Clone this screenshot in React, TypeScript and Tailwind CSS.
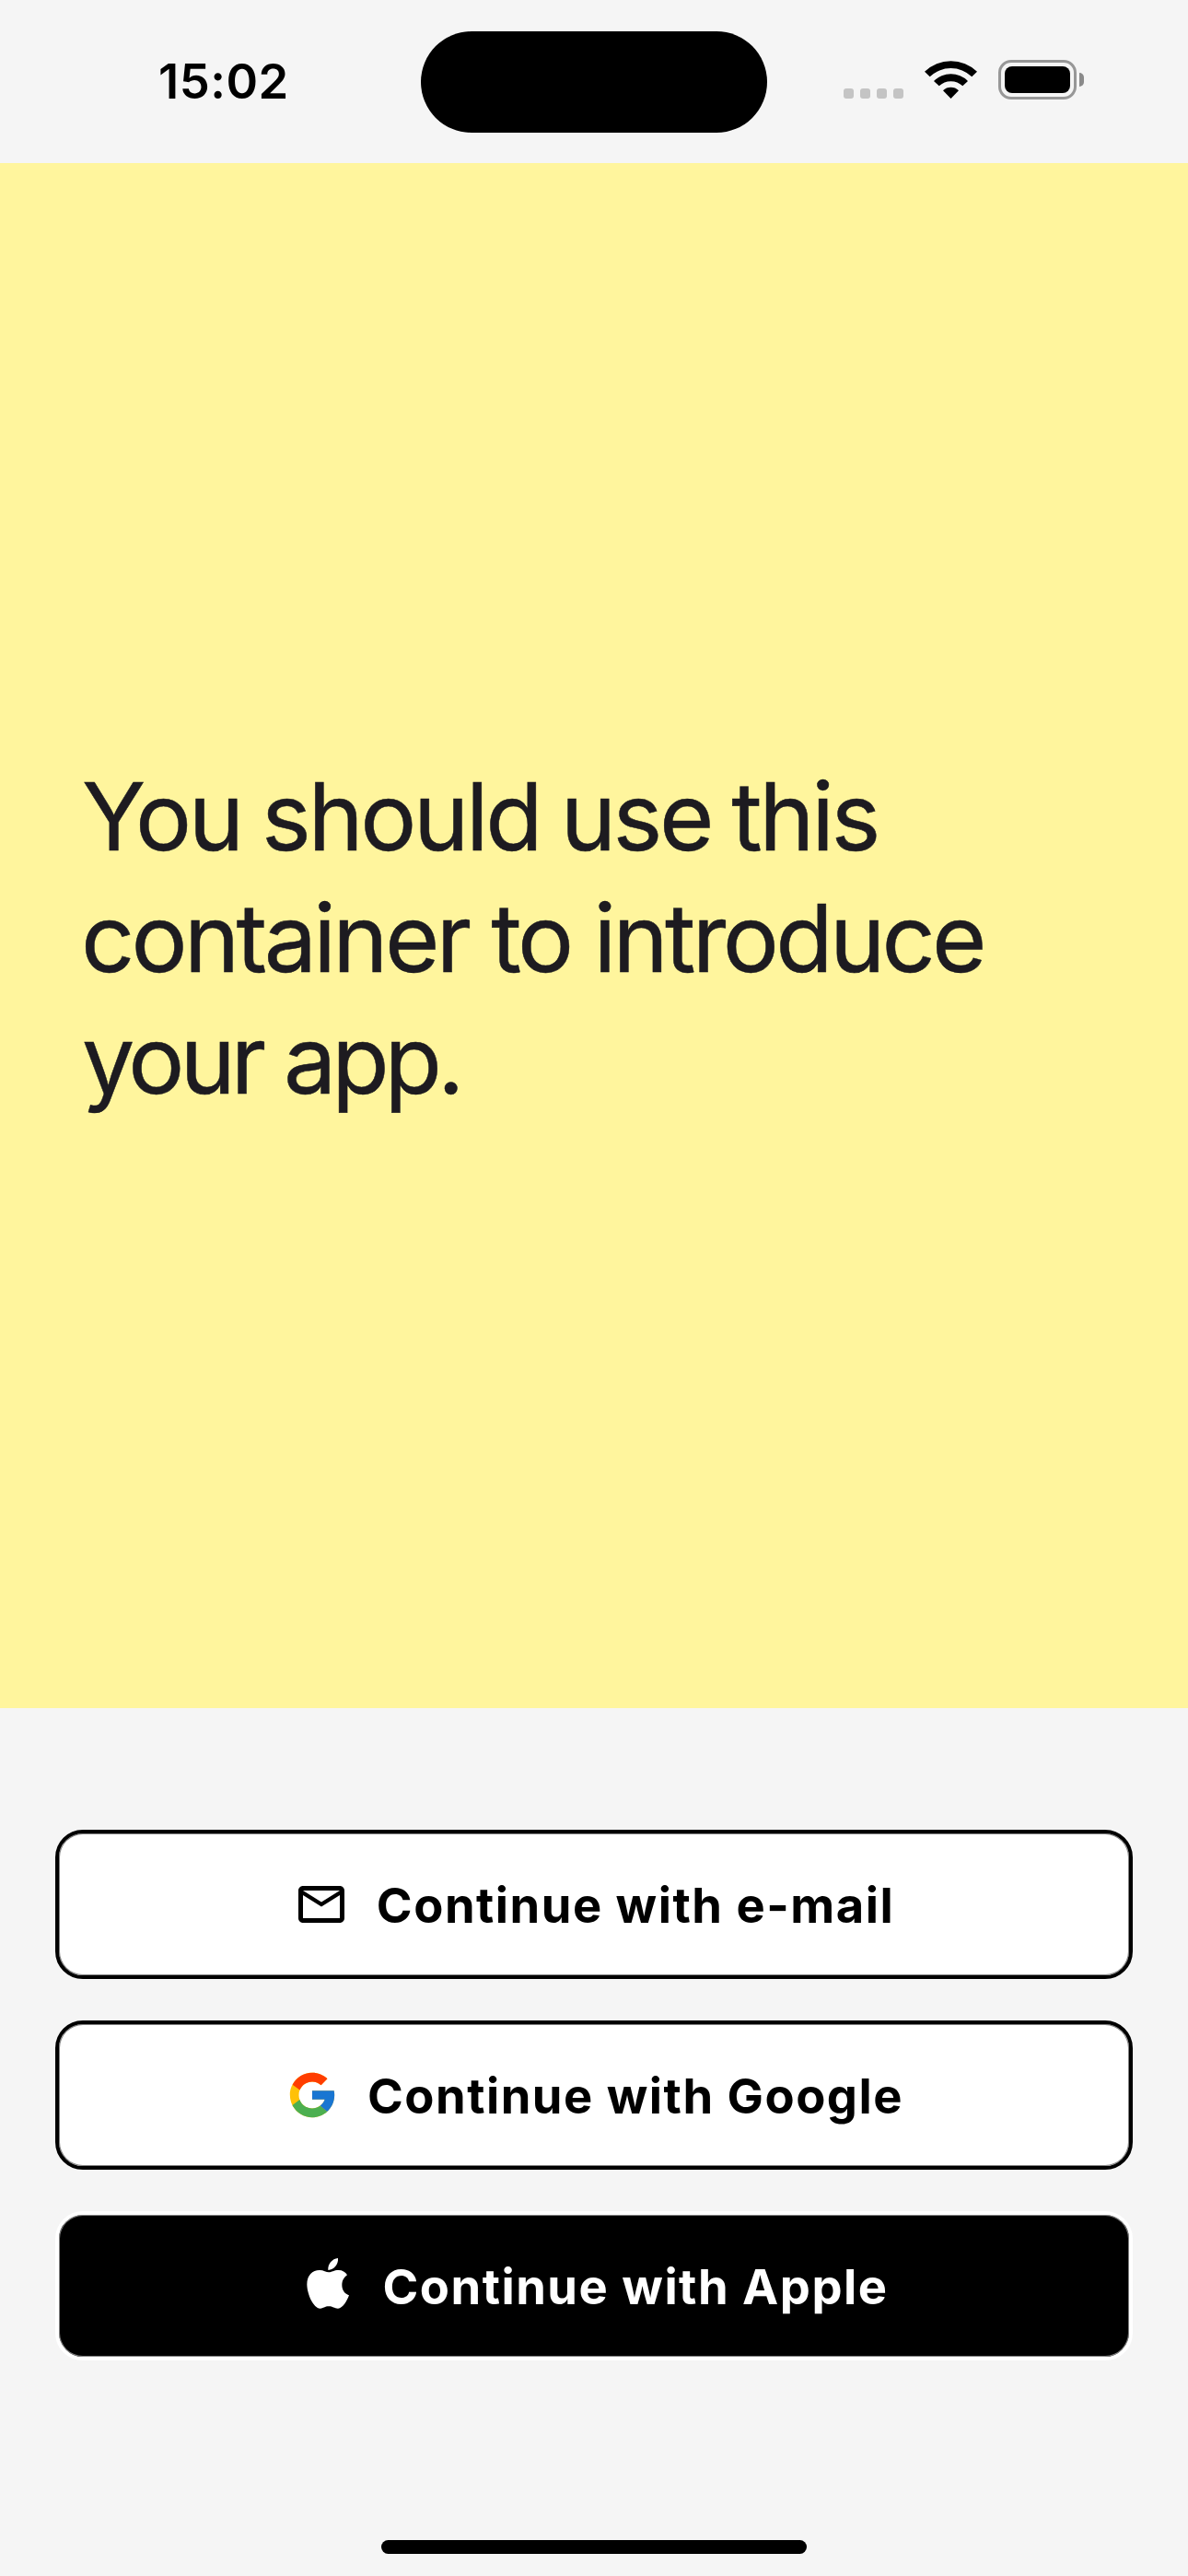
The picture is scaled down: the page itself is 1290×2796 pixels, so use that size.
import type { ReactNode } from "react";
import { FcGoogle } from "react-icons/fc";

function StatusBar() {
  return (
    <header className="flex h-[177px] items-start">
      <div className="mt-[56px] w-[457px] pl-[172px] text-[52.5px] leading-[64px] font-semibold tracking-[0.5px] text-black">15:02</div>
      <div className="mt-[34px] h-[110px] w-[376px] rounded-full bg-black" />
      <div className="mt-[65px] ml-[83px] flex h-[43px] items-start">
        <div className="mt-[31px] flex gap-[7px]">
          {[0, 1, 2, 3].map((i) => (
            <span key={i} className="h-[11px] w-[11px] rounded-[3px] bg-[#c4c4c4]" />
          ))}
        </div>
        <svg className="ml-[23px] h-[43px] w-[57px]" viewBox="0 0 57 43">
          <path d="M5.700 18.200 L0 12.800 A41 41 0 0 1 57 12.800 L51.300 18.200 A33 33 0 0 0 5.700 18.200Z" />
          <path d="M15.700 28.300 L10 22.900 A26.500 26.500 0 0 1 47 22.900 L41.300 28.300 A18.500 18.500 0 0 0 15.700 28.300Z" />
          <path d="M28.500 42 L20 33.200 A12.500 12.500 0 0 1 37 33.200Z" />
        </svg>
        <div className="ml-[23px] flex h-[43px] w-[85px] rounded-[14px] border-[3px] border-[#979797] p-[4px]">
          <div className="flex-1 rounded-[8px] bg-black" />
        </div>
        <div className="mt-[14px] ml-[3px] h-[15px] w-[5px] rounded-r-full bg-[#8a8a8a]" />
      </div>
    </header>
  );
}

function LoginButton({ icon, label, dark = false }: { icon: ReactNode; label: string; dark?: boolean }) {
  return (
    <button
      className={
        "flex h-[162px] w-full items-center justify-center rounded-[30px] border-4 text-[52.5px] leading-[60px] font-bold tracking-[1.5px] shadow-[inset_0_0_0_1px_#808080] " +
        (dark ? "border-white bg-black text-white" : "border-black bg-white text-black")
      }
    >
      {icon}
      <span className="pt-[1px]">{label}</span>
    </button>
  );
}

const EmailIcon = () => (
  <svg className="mr-[30px] h-[60px] w-[60px]" viewBox="0 0 24 24" fill="currentColor">
    <path d="M22 6c0-1.100-.9-2-2-2H4c-1.100 0-2 .9-2 2v12c0 1.100.9 2 2 2h16c1.100 0 2-.9 2-2V6zm-2 0-8 5-8-5h16zm0 12H4V8l8 5 8-5v10z" />
  </svg>
);

const AppleIcon = () => (
  <svg className="mr-[30px] h-[60px] w-[60px]" viewBox="17 33 180 180" fill="currentColor">
    <path d="M108 72C106 52 121 35 140 33C142 53 127 71 108 72Z" />
    <path d="M110 79C102 79 93 72 80 72C57 72 39 89 39 118C39 150 60 197 82 197C92 197 97 190 110 190C123 190 128 197 140 197C156 197 170 170 176 154C161 149 153 136 153 120C153 106 160 95 170 88C164 78 154 72 142 72C127 72 119 79 110 79Z" />
  </svg>
);

export default function App() {
  return (
    <div className="flex h-[2796px] w-[1290px] flex-col bg-[#f5f5f5] font-['Inter',sans-serif]">
      <StatusBar />
      <main className="flex h-[1677px] items-center bg-[#fff59d] px-[90px] pt-[4px]">
        <h1 className="text-[102px] leading-[132px] font-normal text-[#1d1b20] [-webkit-text-stroke:0.5px_currentColor]">
          <span className="-ml-px block w-max tracking-[-3.4px] [word-spacing:-3px]">You should use this</span>
          <span className="-ml-[2px] block w-max tracking-[-3.7px]">container to introduce</span>
          <span className="-ml-px block w-max tracking-[-5px]">your app.</span>
        </h1>
      </main>
      <section className="mt-[132px] flex flex-col gap-[45px] px-[60px]">
        <LoginButton icon={<EmailIcon />} label="Continue with e-mail" />
        <LoginButton icon={<FcGoogle className="mr-[31px] ml-px h-[58px] w-[58px]" />} label="Continue with Google" />
        <LoginButton dark icon={<AppleIcon />} label="Continue with Apple" />
      </section>
      <div className="mt-auto mb-[24px] h-[15px] w-[462px] self-center rounded-full bg-black" />
    </div>
  );
}
